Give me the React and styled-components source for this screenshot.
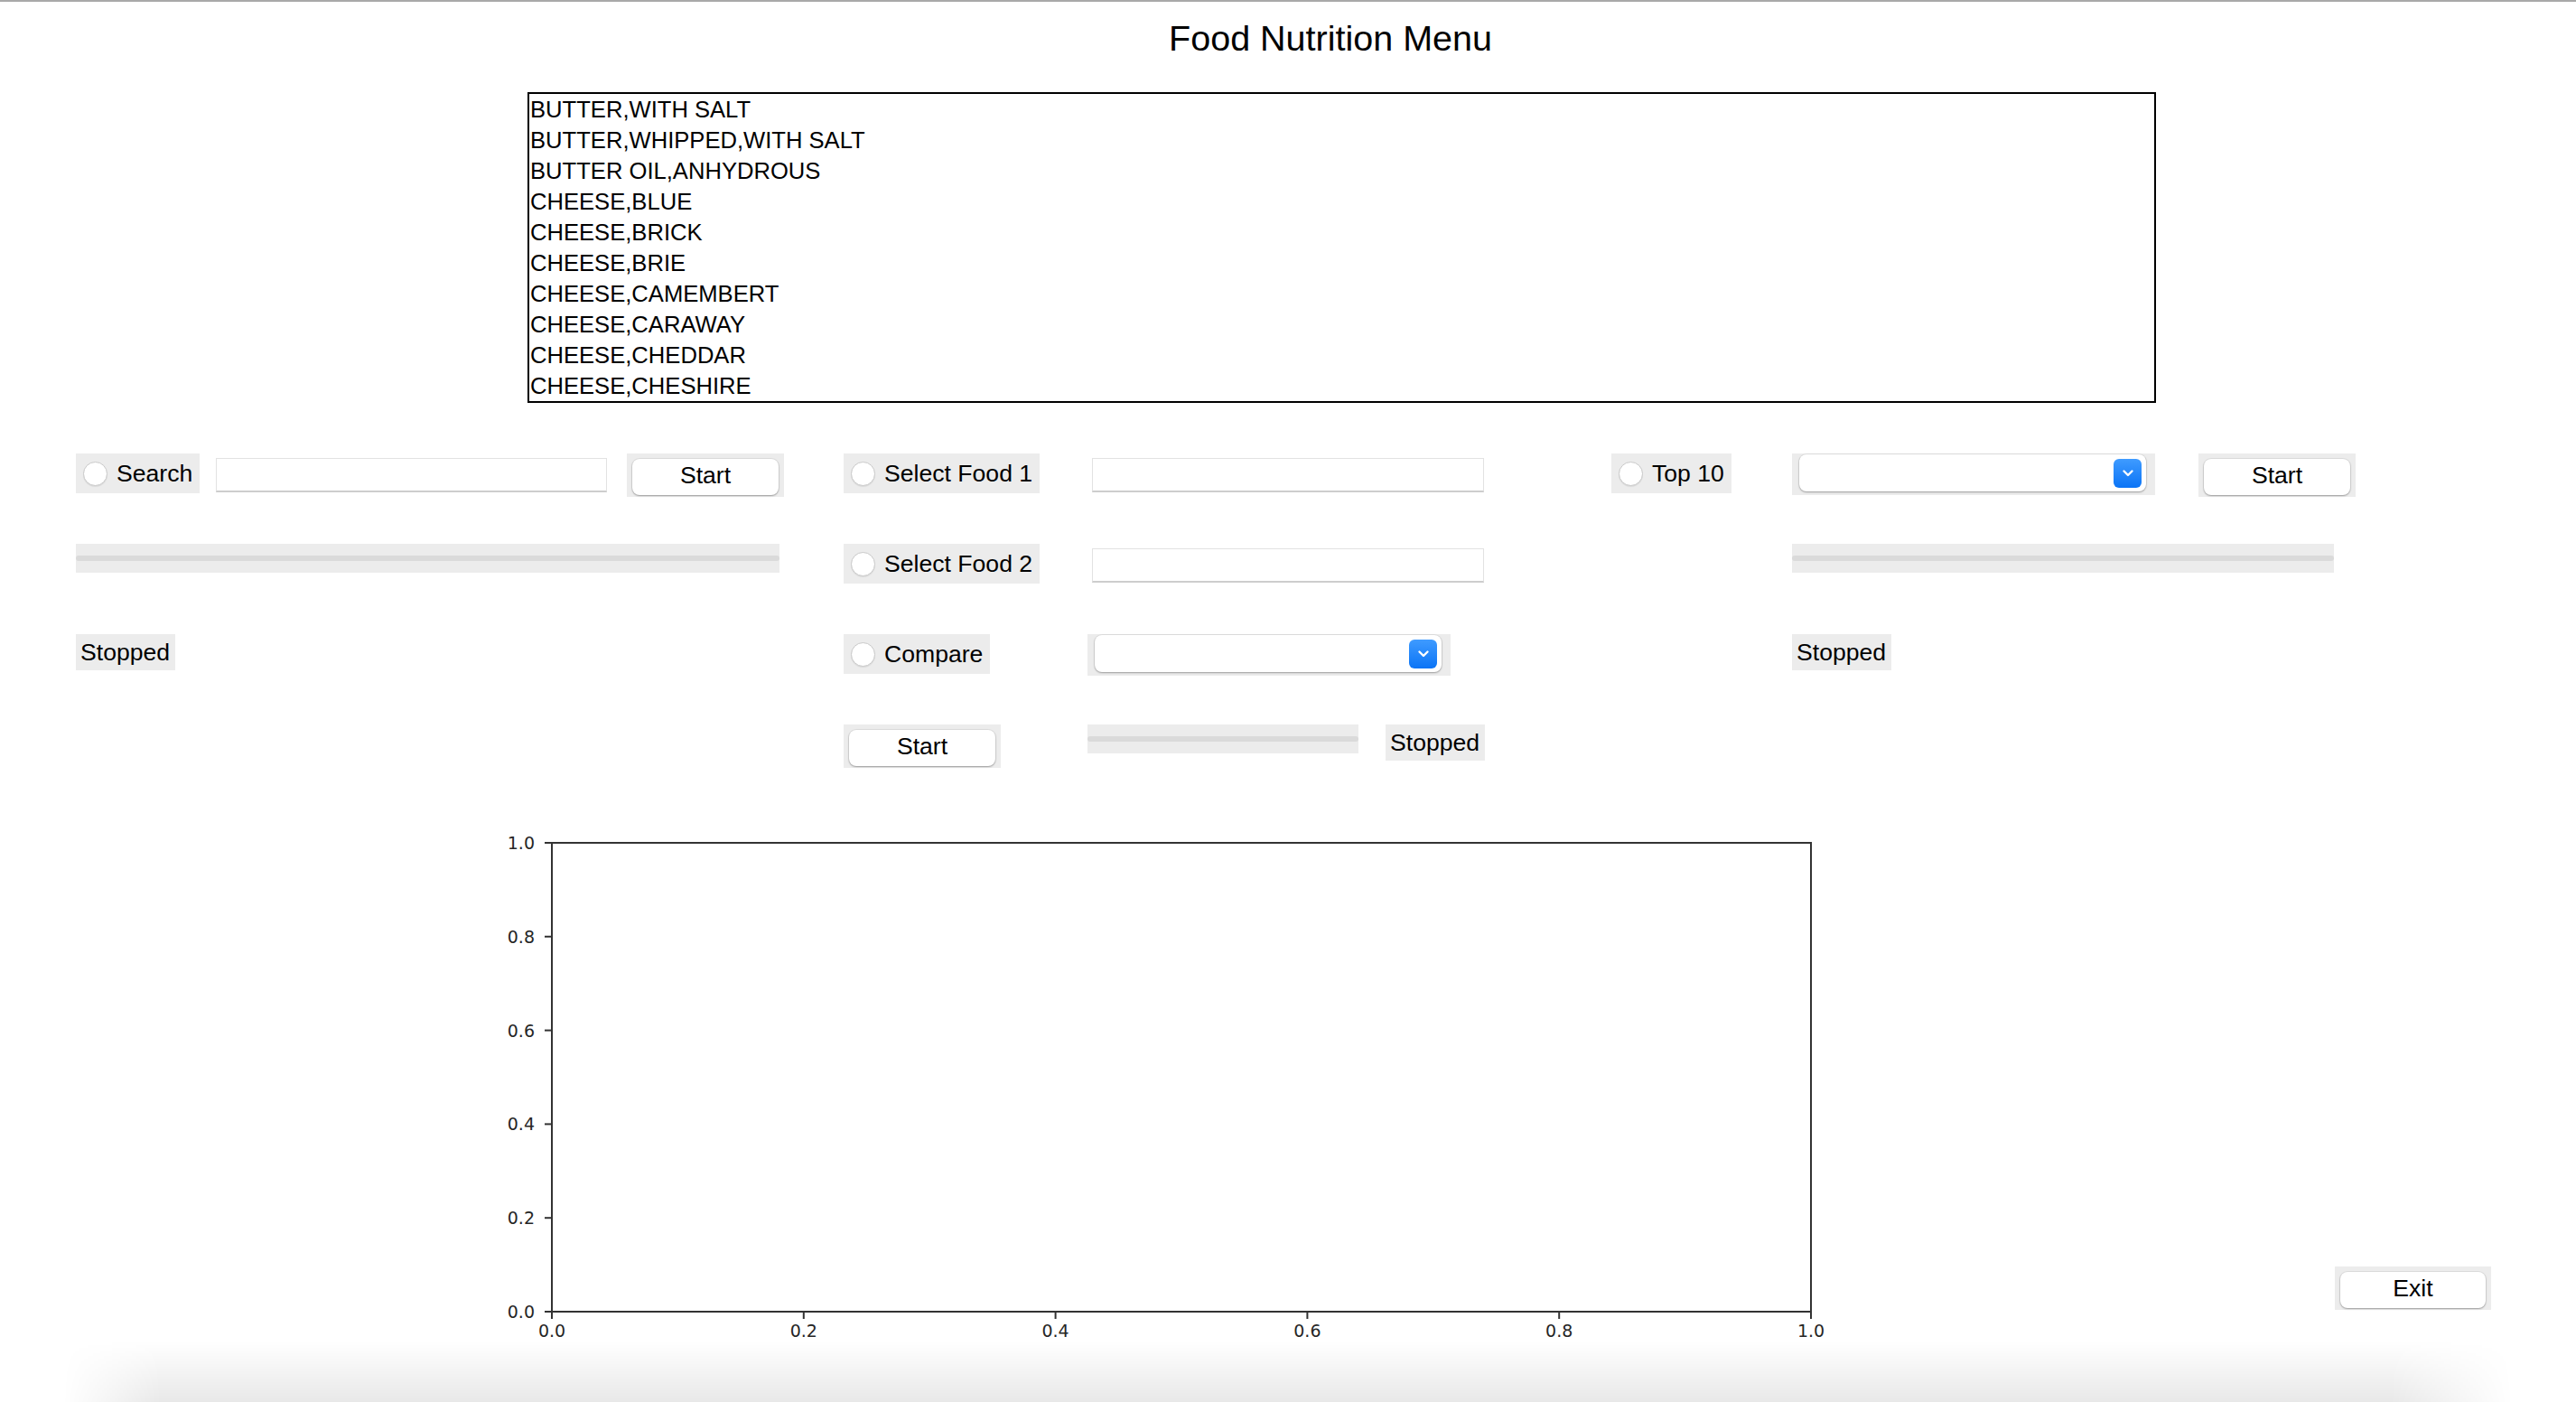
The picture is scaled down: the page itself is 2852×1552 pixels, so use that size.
import React from "react";
import styled, { createGlobalStyle } from "styled-components";

const GlobalStyle = createGlobalStyle`
  html, body {
    margin: 0;
    padding: 0;
    background: #fff;
  }
  body {
    font-family: "Liberation Sans", Arial, sans-serif;
    color: #000;
  }
`;

const Page = styled.div`
  width: 2852px;
  height: 1552px;
  display: flex;
  flex-direction: column;
  overflow: hidden;
  background: #fff;
`;
const TopLine = styled.div`
  flex: none;
  height: 2px;
  background: #a9a9a9;
`;
const Title = styled.h1`
  flex: none;
  margin: 17px 0 0;
  padding-left: 94px;
  font-size: 39.5px;
  font-weight: 400;
  line-height: 46px;
  text-align: center;
`;
const ListBox = styled.ul`
  flex: none;
  list-style: none;
  box-sizing: border-box;
  width: 1803px;
  height: 344px;
  margin: 37px 0 0 584px;
  padding: 0 0 0 1px;
  border: 2px solid #000;
  overflow: hidden;
`;
const ListItem = styled.li`
  height: 34px;
  font-size: 25.6px;
  line-height: 34px;
  white-space: nowrap;
`;

const Controls = styled.div`
  flex: none;
  display: flex;
  margin-top: 56px;
  padding-left: 84px;
`;
const Panel = styled.div`
  display: grid;
  grid-template-columns: ${(p) => p.$cols};
  grid-auto-rows: 100px;
  align-items: start;
  justify-items: start;
  width: ${(p) => p.$width}px;
  flex: none;
`;
const Cell = styled.div`
  display: flex;
  align-items: flex-start;
  grid-column: ${(p) => p.$col || "auto"};
  gap: ${(p) => p.$gap || 0}px;
`;

const RadioLabel = styled.label`
  display: inline-flex;
  align-items: center;
  gap: 10px;
  height: 44px;
  padding: 0 8px 0 8px;
  background: #ececec;
  font-size: 26.6px;
  white-space: nowrap;
`;
const RadioDot = styled.span`
  box-sizing: border-box;
  width: 27px;
  height: 27px;
  border-radius: 50%;
  background: #fff;
  border: 1px solid #c9c9c9;
  box-shadow: 0 1px 1px rgba(0, 0, 0, 0.08);
`;

const Entry = styled.div`
  box-sizing: border-box;
  width: ${(p) => p.$width}px;
  height: 38px;
  margin: 5px 0 0 ${(p) => p.$offset || 0}px;
  background: #fff;
  border: 1px solid #e2e2e2;
  border-bottom: 2px solid #cdcdcd;
`;

const ButtonFrame = styled.div`
  box-sizing: border-box;
  width: ${(p) => p.$width || 174}px;
  height: 48px;
  padding: 6px;
  background: #ececec;
  flex: none;
`;
const Button = styled.button`
  box-sizing: border-box;
  width: 100%;
  height: 40px;
  border: none;
  border-radius: 8px;
  background: #fff;
  box-shadow: 0 1px 2px rgba(0, 0, 0, 0.3), 0 0 0 1px rgba(0, 0, 0, 0.06);
  font-family: "Liberation Sans", Arial, sans-serif;
  font-size: 26.6px;
  color: #000;
  padding: 0 0 3px;
`;

const ComboFrame = styled.div`
  box-sizing: border-box;
  width: 402px;
  height: 46px;
  padding: 1px 10px 4px 8px;
  background: #ececec;
  flex: none;
`;
const ComboBox = styled.div`
  display: flex;
  align-items: center;
  justify-content: flex-end;
  height: 41px;
  padding-right: 5px;
  border-radius: 8px;
  background: #fff;
  box-shadow: 0 1px 2px rgba(0, 0, 0, 0.3), 0 0 0 1px rgba(0, 0, 0, 0.06);
`;
const ComboArrow = styled.span`
  display: flex;
  align-items: center;
  justify-content: center;
  width: 31px;
  height: 32px;
  border-radius: 6px;
  background: linear-gradient(#3f9bff, #0b74f6);
`;

const Progress = styled.div`
  box-sizing: border-box;
  width: ${(p) => p.$width}px;
  height: 32px;
  padding-top: 13px;
  background: #ececec;
  flex: none;
`;
const Track = styled.div`
  height: 6px;
  border-radius: 3px;
  background: #dadada;
`;

const Status = styled.div`
  height: 40px;
  padding: 0 6px 0 5px;
  background: #ececec;
  font-size: 26.6px;
  line-height: 40px;
  white-space: nowrap;
`;

const BottomRow = styled.div`
  flex: none;
  display: flex;
  align-items: flex-start;
  height: 583px;
`;
const Chart = styled.svg`
  flex: none;
  margin: 8px 0 0 540px;
  font-family: "DejaVu Sans", sans-serif;
`;
const ExitWrap = styled.div`
  margin: 500px 0 0 545px;
`;
const Shadow = styled.div`
  flex: 1;
  margin: 0 70px;
  background: linear-gradient(to bottom, rgba(0, 0, 0, 0) 0%, rgba(0, 0, 0, 0.09) 100%);
  -webkit-mask-image: linear-gradient(to right, transparent 0, #000 4%, #000 95%, transparent 100%);
  mask-image: linear-gradient(to right, transparent 0, #000 4%, #000 95%, transparent 100%);
`;

const foods = [
  "BUTTER,WITH SALT",
  "BUTTER,WHIPPED,WITH SALT",
  "BUTTER OIL,ANHYDROUS",
  "CHEESE,BLUE",
  "CHEESE,BRICK",
  "CHEESE,BRIE",
  "CHEESE,CAMEMBERT",
  "CHEESE,CARAWAY",
  "CHEESE,CHEDDAR",
  "CHEESE,CHESHIRE",
];

const Radio = ({ children }) => (
  <RadioLabel>
    <RadioDot />
    {children}
  </RadioLabel>
);

const StartButton = ({ label = "Start", width }) => (
  <ButtonFrame $width={width}>
    <Button>{label}</Button>
  </ButtonFrame>
);

const Combo = () => (
  <ComboFrame>
    <ComboBox>
      <ComboArrow>
        <svg width="14" height="10" viewBox="0 0 14 10">
          <polyline points="2.5,2.5 7,7 11.5,2.5" fill="none" stroke="#fff" strokeWidth="2.4" strokeLinecap="round" strokeLinejoin="round" />
        </svg>
      </ComboArrow>
    </ComboBox>
  </ComboFrame>
);

const Bar = ({ width }) => (
  <Progress $width={width}>
    <Track />
  </Progress>
);

// empty matplotlib axes, 0..1 on both sides
const EmptyPlot = () => {
  const left = 71;
  const top = 23;
  const w = 1394;
  const h = 519;
  const ticks = [0, 0.2, 0.4, 0.6, 0.8, 1.0];
  return (
    <Chart width="1500" height="575" viewBox="0 0 1500 575">
      <rect x={left} y={top} width={w} height={h} fill="none" stroke="#333" strokeWidth="2" />
      {ticks.map((t) => {
        const y = top + h - t * h;
        const x = left + t * w;
        return (
          <g key={t}>
            <line x1={left - 8} y1={y} x2={left} y2={y} stroke="#333" strokeWidth="2" />
            <text x={left - 19} y={y + 7} fontSize="19" fill="#262626" textAnchor="end">
              {t.toFixed(1)}
            </text>
            <line x1={x} y1={top + h} x2={x} y2={top + h + 8} stroke="#333" strokeWidth="2" />
            <text x={x} y={top + h + 28} fontSize="19" fill="#262626" textAnchor="middle">
              {t.toFixed(1)}
            </text>
          </g>
        );
      })}
    </Chart>
  );
};

const App = () => {
  return (
    <Page>
      <GlobalStyle />
      <TopLine />
      <Title>Food Nutrition Menu</Title>
      <ListBox>
        {foods.map((f) => (
          <ListItem key={f}>{f}</ListItem>
        ))}
      </ListBox>

      <Controls>
        <Panel $width={850} $cols="155px 455px 174px">
          <Radio>Search</Radio>
          <Entry $width={433} />
          <StartButton />
          <Cell $col="1 / -1">
            <Bar width={779} />
          </Cell>
          <Status>Stopped</Status>
        </Panel>

        <Panel $width={850} $cols="270px 1fr">
          <Radio>Select Food 1</Radio>
          <Entry $width={434} $offset={5} />
          <Radio>Select Food 2</Radio>
          <Entry $width={434} $offset={5} />
          <Radio>Compare</Radio>
          <Combo />
          <StartButton />
          <Cell $gap={30}>
            <Bar width={300} />
            <Status>Stopped</Status>
          </Cell>
        </Panel>

        <Panel $width={868} $cols="200px 1fr">
          <Radio>Top 10</Radio>
          <Cell $gap={48}>
            <Combo />
            <StartButton />
          </Cell>
          <Cell $col="2">
            <Bar width={600} />
          </Cell>
          <Cell $col="2">
            <Status>Stopped</Status>
          </Cell>
        </Panel>
      </Controls>

      <BottomRow>
        <EmptyPlot />
        <ExitWrap>
          <StartButton label="Exit" width={173} />
        </ExitWrap>
      </BottomRow>
      <Shadow />
    </Page>
  );
};

export default App;
